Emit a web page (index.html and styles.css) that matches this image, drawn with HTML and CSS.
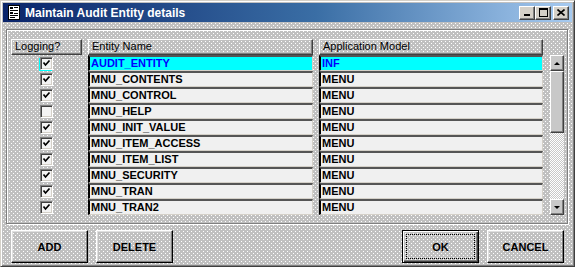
FILE: index.html
```html
<!DOCTYPE html>
<html lang="en">
<head>
    <meta charset="UTF-8">
    <title>Maintain Audit Entity details</title>
    <link rel="stylesheet" href="styles.css">
</head>
<body>
    <div class="window">
        <div class="titlebar">
            <svg class="app-icon" width="12" height="15" viewBox="0 0 12 15">
                <rect x="0.5" y="0.5" width="11" height="14" fill="#fff" stroke="#000"/>
                <rect x="2" y="2" width="3" height="2" fill="#000"/>
                <rect x="6" y="2" width="4" height="1" fill="#000"/>
                <rect x="2" y="5" width="8" height="1" fill="#000"/>
                <rect x="2" y="7" width="3" height="2" fill="#000"/>
                <rect x="6" y="8" width="4" height="1" fill="#000"/>
                <rect x="2" y="10" width="8" height="1" fill="#000"/>
                <rect x="2" y="12" width="5" height="1" fill="#000"/>
            </svg>
            <span class="title">Maintain Audit Entity details</span>
            <div class="controls">
                <span class="ctl"><svg width="8" height="7" viewBox="0 0 8 7"><rect x="1" y="5" width="6" height="2" fill="#000"/></svg></span>
                <span class="ctl"><svg width="9" height="9" viewBox="0 0 9 9"><rect x="0.5" y="0.5" width="8" height="8" fill="none" stroke="#000"/><rect x="0" y="0" width="9" height="2" fill="#000"/></svg></span>
                <span class="ctl close"><svg width="8" height="7" viewBox="0 0 8 7"><path d="M0.5 0.5 L7.5 6.5 M7.5 0.5 L0.5 6.5" stroke="#000" stroke-width="1.6"/></svg></span>
            </div>
        </div>

        <div class="frame">
            <div class="list">
                <div class="grid">
                    <div class="head">Logging?</div>
                    <div class="head">Entity Name</div>
                    <div class="head">Application Model</div>

                    <div class="checkcell"><span class="check on focus"></span></div>
                    <div class="cell current">AUDIT_ENTITY</div>
                    <div class="cell current">INF</div>

                    <div class="checkcell"><span class="check on"></span></div>
                    <div class="cell">MNU_CONTENTS</div>
                    <div class="cell">MENU</div>

                    <div class="checkcell"><span class="check on"></span></div>
                    <div class="cell">MNU_CONTROL</div>
                    <div class="cell">MENU</div>

                    <div class="checkcell"><span class="check"></span></div>
                    <div class="cell">MNU_HELP</div>
                    <div class="cell">MENU</div>

                    <div class="checkcell"><span class="check on"></span></div>
                    <div class="cell">MNU_INIT_VALUE</div>
                    <div class="cell">MENU</div>

                    <div class="checkcell"><span class="check on"></span></div>
                    <div class="cell">MNU_ITEM_ACCESS</div>
                    <div class="cell">MENU</div>

                    <div class="checkcell"><span class="check on"></span></div>
                    <div class="cell">MNU_ITEM_LIST</div>
                    <div class="cell">MENU</div>

                    <div class="checkcell"><span class="check on"></span></div>
                    <div class="cell">MNU_SECURITY</div>
                    <div class="cell">MENU</div>

                    <div class="checkcell"><span class="check on"></span></div>
                    <div class="cell">MNU_TRAN</div>
                    <div class="cell">MENU</div>

                    <div class="checkcell"><span class="check on"></span></div>
                    <div class="cell">MNU_TRAN2</div>
                    <div class="cell">MENU</div>
                </div>

                <div class="scrollbar">
                    <span class="sb-btn up"></span>
                    <span class="thumb"></span>
                    <span class="track"></span>
                    <span class="sb-btn down"></span>
                </div>
            </div>
        </div>

        <div class="actions">
            <button>ADD</button>
            <button>DELETE</button>
            <button class="default push">OK</button>
            <button>CANCEL</button>
        </div>
    </div>
</body>
</html>
```

FILE: styles.css
```css
body{
    margin: 0;
    font-family: "Liberation Sans", Arial, sans-serif;
}
.window{
    width: 575px;
    height: 267px;
    box-sizing: border-box;
    border: 1px solid;
    border-color: #d4d0c8 #404040 #404040 #d4d0c8;
    box-shadow: inset 1px 1px #fff, inset -1px -1px #808080;
    padding: 2px;
    display: flex;
    flex-direction: column;
    background-color: #c0c0c0;
    background-image:
        conic-gradient(at 1px 1px, transparent 270deg, #fff 0),
        conic-gradient(at 1px 1px, transparent 270deg, #fff 0);
    background-size: 4px 4px, 4px 4px;
    background-position: 0 0, 2px 2px;
}

/* title bar */
.titlebar{
    height: 19px;
    display: flex;
    align-items: center;
    padding: 0 3px 0 5px;
    background: linear-gradient(90deg, #0a246a, #3a6ea5 55%, #a6caf0);
}
.app-icon{
    display: block;
}
.title{
    margin-left: 5px;
    color: #fff;
    font-weight: bold;
    font-size: 12px;
}
.controls{
    margin-left: auto;
    display: flex;
}
.ctl{
    width: 16px;
    height: 14px;
    box-sizing: border-box;
    border: 1px solid;
    border-color: #fff #404040 #404040 #fff;
    box-shadow: inset -1px -1px #808080;
    background: #d4d0c8;
    display: flex;
    justify-content: center;
    align-items: center;
}
.ctl.close{
    margin-left: 2px;
}

/* group frame */
.frame{
    margin: 7px 4px 0 3px;
    height: 195px;
    box-sizing: border-box;
    border: 1px solid #808080;
    box-shadow: inset 1px 1px #fff, 1px 1px #fff;
    padding: 9px 0 0 4px;
}
.list{
    display: flex;
}
.grid{
    display: grid;
    grid-template-columns: 71px 225px 224px;
    grid-auto-rows: 16px;
    column-gap: 6px;
}
.head{
    box-sizing: border-box;
    border: 1px solid;
    border-color: #fff #404040 #404040 #fff;
    box-shadow: inset -1px -1px #808080;
    font-size: 11px;
    line-height: 13px;
    padding-left: 3px;
    color: #000;
}
.cell{
    box-sizing: border-box;
    background: #f0f0f0;
    border-style: solid;
    border-width: 2px 1px 1px 2px;
    border-color: #555 #d4d0c8 #d4d0c8 #000;
    font-size: 11px;
    font-weight: bold;
    line-height: 13px;
    padding-left: 1px;
    white-space: nowrap;
    color: #000;
}
.cell.current{
    background: #00ffff;
    color: #0000ff;
}
.checkcell{
    display: flex;
    justify-content: center;
    align-items: center;
}
.check{
    width: 13px;
    height: 13px;
    box-sizing: border-box;
    border: 1px solid;
    border-color: #808080 #fff #fff #808080;
    box-shadow: inset 1px 1px #404040, inset -1px -1px #d4d0c8;
    background: #f4f4f4;
}
.check.on{
    background: #f4f4f4 url("data:image/svg+xml,%3Csvg xmlns='http://www.w3.org/2000/svg' width='11' height='11'%3E%3Cpath d='M2.5 4.5 L4.5 7 L8.5 2.5' fill='none' stroke='%23000' stroke-width='1.7'/%3E%3C/svg%3E") center/11px 11px no-repeat;
}
.check.focus{
    box-shadow: inset 1px 1px #404040, inset -1px -1px #d4d0c8, -1px 1px #00ffff;
}

/* scrollbar */
.scrollbar{
    margin: 16px 0 0 7px;
    width: 14px;
    height: 160px;
    display: flex;
    flex-direction: column;
    background: repeating-conic-gradient(#fff 0 25%, #c8c8c8 0 50%) 0 0/2px 2px;
}
.sb-btn, .thumb{
    box-sizing: border-box;
    border: 1px solid;
    border-color: #fff #404040 #404040 #fff;
    box-shadow: inset -1px -1px #808080;
    background: #c8c8c8;
}
.sb-btn{
    height: 16px;
    display: flex;
    justify-content: center;
    align-items: center;
}
.sb-btn::before{
    content: "";
    border-left: 3px solid transparent;
    border-right: 3px solid transparent;
}
.sb-btn.up::before{
    border-bottom: 3px solid #000;
}
.sb-btn.down::before{
    border-top: 3px solid #000;
}
.thumb{
    height: 62px;
}
.track{
    flex: 1;
}

/* buttons */
.actions{
    display: flex;
    gap: 8px;
    margin-top: 6px;
    padding: 0 8px;
}
button{
    width: 77px;
    height: 33px;
    box-sizing: border-box;
    font-family: "Liberation Sans", Arial, sans-serif;
    font-size: 11px;
    font-weight: bold;
    color: #000;
    background: transparent;
    border: 1px solid;
    border-color: #fff #000 #000 #fff;
    box-shadow: inset -1px -1px #808080, inset 1px 1px #dfdfdf;
    padding: 0;
}
.push{
    margin-left: auto;
}
.default{
    position: relative;
    border-color: #000;
    box-shadow: inset 1px 1px #fff, inset -1px -1px #404040, inset -2px -2px #808080;
}
.default::after{
    content: "";
    position: absolute;
    inset: 3px;
    border: 1px dotted #000;
}
```
